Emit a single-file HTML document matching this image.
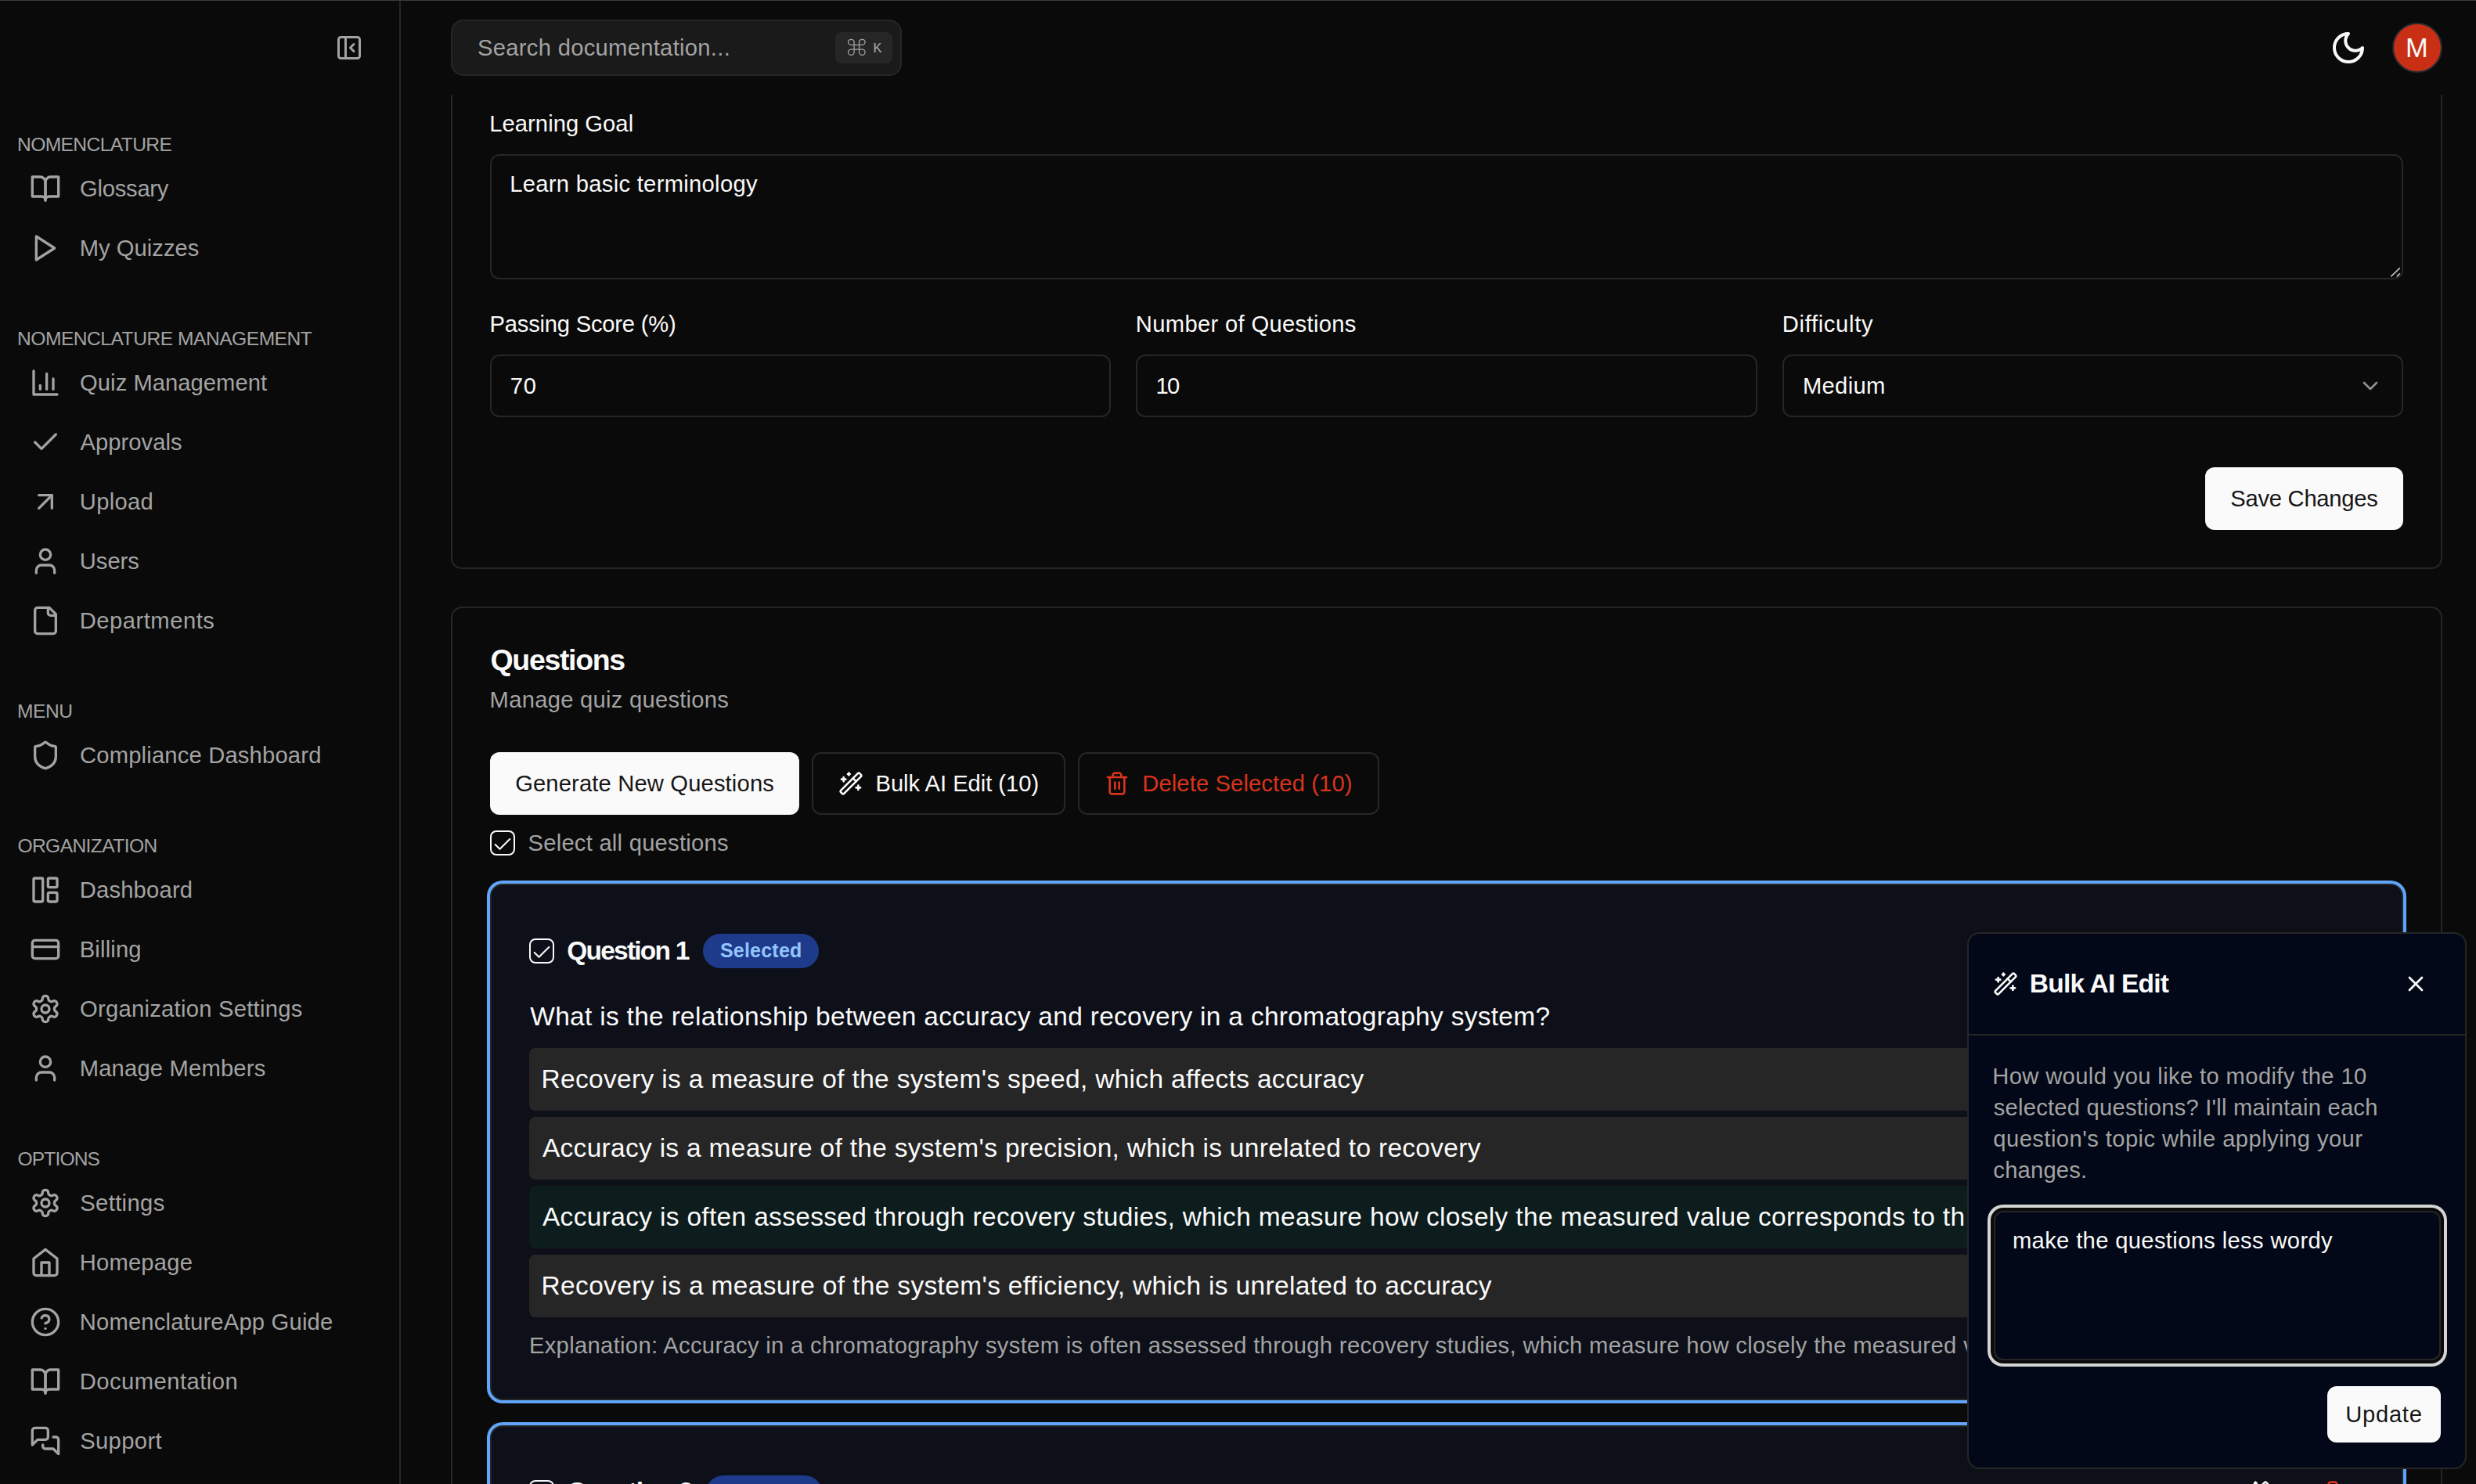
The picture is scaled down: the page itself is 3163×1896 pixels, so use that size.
<!DOCTYPE html>
<html><head><meta charset="utf-8"><title>Quiz</title><style>
html,body{margin:0;padding:0;background:#0a0a0a;}
body{width:3163px;height:1896px;overflow:hidden;position:relative;font-family:"Liberation Sans",sans-serif;}
.t{position:absolute;white-space:nowrap;line-height:1;}
.b{position:absolute;box-sizing:border-box;}
.ic{position:absolute;overflow:visible;}
</style></head><body>
<div class="b" style="left:0px;top:0px;width:3163px;height:1px;background:#3a3c3e"></div>
<div class="b" style="left:510px;top:1px;width:2px;height:1896px;background:#262626"></div>
<svg class="ic" style="left:428px;top:43px;" width="36" height="36" viewBox="0 0 24 24" fill="none" stroke="#a3a3a3" stroke-width="2" stroke-linecap="round" stroke-linejoin="round"><rect width="18" height="18" x="3" y="3" rx="2"/><path d="M9 3v18"/><path d="m16 15-3-3 3-3"/></svg>
<div id="t0" class="t" style="left:21.98px;top:171px;line-height:27px;font-size:24.6px;color:#a3a3a3;letter-spacing:-0.595px;">NOMENCLATURE</div>
<svg class="ic" style="left:38px;top:221px;" width="40" height="40" viewBox="0 0 24 24" fill="none" stroke="#a3a3a3" stroke-width="2" stroke-linecap="round" stroke-linejoin="round"><path d="M2 3h6a4 4 0 0 1 4 4v14a3 3 0 0 0-3-3H2z"/><path d="M22 3h-6a4 4 0 0 0-4 4v14a3 3 0 0 1 3-3h7z"/></svg>
<div id="t1" class="t" style="left:102.03px;top:225px;line-height:32px;font-size:29.2px;color:#a3a3a3;letter-spacing:-0.247px;">Glossary</div>
<svg class="ic" style="left:38px;top:297px;" width="40" height="40" viewBox="0 0 24 24" fill="none" stroke="#a3a3a3" stroke-width="2" stroke-linecap="round" stroke-linejoin="round"><polygon points="5 3 19 12 5 21 5 3"/></svg>
<div id="t2" class="t" style="left:101.70px;top:301px;line-height:32px;font-size:29.2px;color:#a3a3a3;letter-spacing:0.033px;">My Quizzes</div>
<div id="t3" class="t" style="left:21.98px;top:419px;line-height:27px;font-size:24.6px;color:#a3a3a3;letter-spacing:-0.488px;">NOMENCLATURE MANAGEMENT</div>
<svg class="ic" style="left:38px;top:469px;" width="40" height="40" viewBox="0 0 24 24" fill="none" stroke="#a3a3a3" stroke-width="2" stroke-linecap="round" stroke-linejoin="round"><path d="M3 3v18h18"/><path d="M18 17V9"/><path d="M13 17V5"/><path d="M8 17v-3"/></svg>
<div id="t4" class="t" style="left:102.12px;top:473px;line-height:32px;font-size:29.2px;color:#a3a3a3;letter-spacing:0.035px;">Quiz Management</div>
<svg class="ic" style="left:38px;top:545px;" width="40" height="40" viewBox="0 0 24 24" fill="none" stroke="#a3a3a3" stroke-width="2" stroke-linecap="round" stroke-linejoin="round"><path d="M20 6 9 17l-5-5"/></svg>
<div id="t5" class="t" style="left:102.44px;top:549px;line-height:32px;font-size:29.2px;color:#a3a3a3;letter-spacing:0.052px;">Approvals</div>
<svg class="ic" style="left:38px;top:621px;" width="40" height="40" viewBox="0 0 24 24" fill="none" stroke="#a3a3a3" stroke-width="2" stroke-linecap="round" stroke-linejoin="round"><path d="M7 7h10v10"/><path d="M7 17 17 7"/></svg>
<div id="t6" class="t" style="left:101.85px;top:625px;line-height:32px;font-size:29.2px;color:#a3a3a3;letter-spacing:0.267px;">Upload</div>
<svg class="ic" style="left:38px;top:697px;" width="40" height="40" viewBox="0 0 24 24" fill="none" stroke="#a3a3a3" stroke-width="2" stroke-linecap="round" stroke-linejoin="round"><path d="M19 21v-2a4 4 0 0 0-4-4H9a4 4 0 0 0-4 4v2"/><circle cx="12" cy="7" r="4"/></svg>
<div id="t7" class="t" style="left:101.85px;top:701px;line-height:32px;font-size:29.2px;color:#a3a3a3;letter-spacing:-0.053px;">Users</div>
<svg class="ic" style="left:38px;top:773px;" width="40" height="40" viewBox="0 0 24 24" fill="none" stroke="#a3a3a3" stroke-width="2" stroke-linecap="round" stroke-linejoin="round"><path d="M15 2H6a2 2 0 0 0-2 2v16a2 2 0 0 0 2 2h12a2 2 0 0 0 2-2V7Z"/><path d="M14 2v4a2 2 0 0 0 2 2h4"/></svg>
<div id="t8" class="t" style="left:101.70px;top:777px;line-height:32px;font-size:29.2px;color:#a3a3a3;letter-spacing:0.506px;">Departments</div>
<div id="t9" class="t" style="left:21.98px;top:895px;line-height:27px;font-size:24.6px;color:#a3a3a3;letter-spacing:-0.469px;">MENU</div>
<svg class="ic" style="left:38px;top:945px;" width="40" height="40" viewBox="0 0 24 24" fill="none" stroke="#a3a3a3" stroke-width="2" stroke-linecap="round" stroke-linejoin="round"><path d="M20 13c0 5-3.5 7.5-7.66 8.95a1 1 0 0 1-.67-.01C7.5 20.5 4 18 4 13V6a1 1 0 0 1 1-1c2 0 4.5-1.2 6.24-2.72a1.17 1.17 0 0 1 1.52 0C14.51 3.81 17 5 19 5a1 1 0 0 1 1 1z"/></svg>
<div id="t10" class="t" style="left:102.02px;top:949px;line-height:32px;font-size:29.2px;color:#a3a3a3;letter-spacing:0.176px;">Compliance Dashboard</div>
<div id="t11" class="t" style="left:22.43px;top:1067px;line-height:27px;font-size:24.6px;color:#a3a3a3;letter-spacing:-0.600px;">ORGANIZATION</div>
<svg class="ic" style="left:38px;top:1117px;" width="40" height="40" viewBox="0 0 24 24" fill="none" stroke="#a3a3a3" stroke-width="2" stroke-linecap="round" stroke-linejoin="round"><rect width="7" height="18" x="3" y="3" rx="1"/><rect width="7" height="7" x="14" y="3" rx="1"/><rect width="7" height="7" x="14" y="14" rx="1"/></svg>
<div id="t12" class="t" style="left:101.70px;top:1121px;line-height:32px;font-size:29.2px;color:#a3a3a3;letter-spacing:0.198px;">Dashboard</div>
<svg class="ic" style="left:38px;top:1193px;" width="40" height="40" viewBox="0 0 24 24" fill="none" stroke="#a3a3a3" stroke-width="2" stroke-linecap="round" stroke-linejoin="round"><rect width="20" height="14" x="2" y="5" rx="2"/><line x1="2" x2="22" y1="10" y2="10"/></svg>
<div id="t13" class="t" style="left:101.70px;top:1197px;line-height:32px;font-size:29.2px;color:#a3a3a3;letter-spacing:0.167px;">Billing</div>
<svg class="ic" style="left:38px;top:1269px;" width="40" height="40" viewBox="0 0 24 24" fill="none" stroke="#a3a3a3" stroke-width="2" stroke-linecap="round" stroke-linejoin="round"><path d="M12.22 2h-.44a2 2 0 0 0-2 2v.18a2 2 0 0 1-1 1.73l-.43.25a2 2 0 0 1-2 0l-.15-.08a2 2 0 0 0-2.73.73l-.22.38a2 2 0 0 0 .73 2.73l.15.1a2 2 0 0 1 1 1.72v.51a2 2 0 0 1-1 1.74l-.15.09a2 2 0 0 0-.73 2.73l.22.38a2 2 0 0 0 2.73.73l.15-.08a2 2 0 0 1 2 0l.43.25a2 2 0 0 1 1 1.73V20a2 2 0 0 0 2 2h.44a2 2 0 0 0 2-2v-.18a2 2 0 0 1 1-1.73l.43-.25a2 2 0 0 1 2 0l.15.08a2 2 0 0 0 2.73-.73l.22-.39a2 2 0 0 0-.73-2.73l-.15-.08a2 2 0 0 1-1-1.74v-.5a2 2 0 0 1 1-1.74l.15-.09a2 2 0 0 0 .73-2.73l-.22-.38a2 2 0 0 0-2.73-.73l-.15.08a2 2 0 0 1-2 0l-.43-.25a2 2 0 0 1-1-1.73V4a2 2 0 0 0-2-2z"/><circle cx="12" cy="12" r="3"/></svg>
<div id="t14" class="t" style="left:102.12px;top:1273px;line-height:32px;font-size:29.2px;color:#a3a3a3;letter-spacing:0.253px;">Organization Settings</div>
<svg class="ic" style="left:38px;top:1345px;" width="40" height="40" viewBox="0 0 24 24" fill="none" stroke="#a3a3a3" stroke-width="2" stroke-linecap="round" stroke-linejoin="round"><path d="M19 21v-2a4 4 0 0 0-4-4H9a4 4 0 0 0-4 4v2"/><circle cx="12" cy="7" r="4"/></svg>
<div id="t15" class="t" style="left:101.70px;top:1349px;line-height:32px;font-size:29.2px;color:#a3a3a3;letter-spacing:0.178px;">Manage Members</div>
<div id="t16" class="t" style="left:22.43px;top:1467px;line-height:27px;font-size:24.6px;color:#a3a3a3;letter-spacing:-0.849px;">OPTIONS</div>
<svg class="ic" style="left:38px;top:1517px;" width="40" height="40" viewBox="0 0 24 24" fill="none" stroke="#a3a3a3" stroke-width="2" stroke-linecap="round" stroke-linejoin="round"><path d="M12.22 2h-.44a2 2 0 0 0-2 2v.18a2 2 0 0 1-1 1.73l-.43.25a2 2 0 0 1-2 0l-.15-.08a2 2 0 0 0-2.73.73l-.22.38a2 2 0 0 0 .73 2.73l.15.1a2 2 0 0 1 1 1.72v.51a2 2 0 0 1-1 1.74l-.15.09a2 2 0 0 0-.73 2.73l.22.38a2 2 0 0 0 2.73.73l.15-.08a2 2 0 0 1 2 0l.43.25a2 2 0 0 1 1 1.73V20a2 2 0 0 0 2 2h.44a2 2 0 0 0 2-2v-.18a2 2 0 0 1 1-1.73l.43-.25a2 2 0 0 1 2 0l.15.08a2 2 0 0 0 2.73-.73l.22-.39a2 2 0 0 0-.73-2.73l-.15-.08a2 2 0 0 1-1-1.74v-.5a2 2 0 0 1 1-1.74l.15-.09a2 2 0 0 0 .73-2.73l-.22-.38a2 2 0 0 0-2.73-.73l-.15.08a2 2 0 0 1-2 0l-.43-.25a2 2 0 0 1-1-1.73V4a2 2 0 0 0-2-2z"/><circle cx="12" cy="12" r="3"/></svg>
<div id="t17" class="t" style="left:102.17px;top:1521px;line-height:32px;font-size:29.2px;color:#a3a3a3;letter-spacing:0.387px;">Settings</div>
<svg class="ic" style="left:38px;top:1593px;" width="40" height="40" viewBox="0 0 24 24" fill="none" stroke="#a3a3a3" stroke-width="2" stroke-linecap="round" stroke-linejoin="round"><path d="m3 9 9-7 9 7v11a2 2 0 0 1-2 2H5a2 2 0 0 1-2-2z"/><polyline points="9 22 9 12 15 12 15 22"/></svg>
<div id="t18" class="t" style="left:101.70px;top:1597px;line-height:32px;font-size:29.2px;color:#a3a3a3;letter-spacing:0.199px;">Homepage</div>
<svg class="ic" style="left:38px;top:1669px;" width="40" height="40" viewBox="0 0 24 24" fill="none" stroke="#a3a3a3" stroke-width="2" stroke-linecap="round" stroke-linejoin="round"><circle cx="12" cy="12" r="10"/><path d="M9.09 9a3 3 0 0 1 5.83 1c0 2-3 3-3 3"/><path d="M12 17h.01"/></svg>
<div id="t19" class="t" style="left:101.70px;top:1673px;line-height:32px;font-size:29.2px;color:#a3a3a3;letter-spacing:0.198px;">NomenclatureApp Guide</div>
<svg class="ic" style="left:38px;top:1745px;" width="40" height="40" viewBox="0 0 24 24" fill="none" stroke="#a3a3a3" stroke-width="2" stroke-linecap="round" stroke-linejoin="round"><path d="M2 3h6a4 4 0 0 1 4 4v14a3 3 0 0 0-3-3H2z"/><path d="M22 3h-6a4 4 0 0 0-4 4v14a3 3 0 0 1 3-3h7z"/></svg>
<div id="t20" class="t" style="left:101.70px;top:1749px;line-height:32px;font-size:29.2px;color:#a3a3a3;letter-spacing:0.480px;">Documentation</div>
<svg class="ic" style="left:38px;top:1821px;" width="40" height="40" viewBox="0 0 24 24" fill="none" stroke="#a3a3a3" stroke-width="2" stroke-linecap="round" stroke-linejoin="round"><path d="M14 9a2 2 0 0 1-2 2H6l-4 4V4c0-1.1.9-2 2-2h8a2 2 0 0 1 2 2z"/><path d="M18 9h2a2 2 0 0 1 2 2v11l-4-4h-6a2 2 0 0 1-2-2v-1"/></svg>
<div id="t21" class="t" style="left:102.17px;top:1825px;line-height:32px;font-size:29.2px;color:#a3a3a3;letter-spacing:0.368px;">Support</div>
<div class="b" style="left:576px;top:25px;width:576px;height:72px;background:#1a1a1a;border:2px solid #262626;border-radius:16px"></div>
<div id="t22" class="t" style="left:610.07px;top:45px;line-height:32px;font-size:29.2px;color:#a3a3a3;letter-spacing:0.286px;">Search documentation...</div>
<div class="b" style="left:1067px;top:41px;width:73px;height:40px;background:#262626;border-radius:8px"></div>
<svg class="ic" style="left:1080px;top:46px" width="28" height="28" viewBox="0 0 28 28" fill="none" stroke="#a3a3a3" stroke-width="1.3" stroke-linejoin="round"><path d="M11.1 7.85A3.75 3.55 0 1 0 7.35 11.4L21.35 11.4A3.75 3.55 0 1 0 17.6 7.85L17.6 20.75A3.75 3.55 0 1 0 21.35 17.2L7.35 17.2A3.75 3.55 0 1 0 11.1 20.75Z"/></svg>
<div id="t23" class="t" style="left:1115.20px;top:52px;line-height:21px;font-size:18.5px;color:#a3a3a3;letter-spacing:0.000px;font-family:'Liberation Mono',monospace;">K</div>
<svg class="ic" style="left:2976px;top:37px;" width="48" height="48" viewBox="0 0 24 24" fill="none" stroke="#fafafa" stroke-width="2" stroke-linecap="round" stroke-linejoin="round"><path d="M12 3a6 6 0 0 0 9 9 9 9 0 1 1-9-9Z"/></svg>
<div class="b" style="left:3056px;top:29px;width:64px;height:64px;background:#c92f14;border:2px solid #232b33;border-radius:50%"></div>
<div id="t24" class="t" style="left:3073.07px;top:42px;line-height:38px;font-size:34.5px;color:#fafafa;letter-spacing:0.000px;">M</div>
<div class="b" style="left:576px;top:81px;width:2544px;height:646px;border:2px solid #262626;border-radius:14px;clip-path:inset(40px -5px -5px -5px)"></div>
<div id="t25" class="t" style="left:625.30px;top:142px;line-height:32px;font-size:29.2px;color:#fafafa;letter-spacing:0.039px;">Learning Goal</div>
<div class="b" style="left:626px;top:197px;width:2444px;height:160px;border:2px solid #262626;border-radius:12px"></div>
<div id="t26" class="t" style="left:651.20px;top:219px;line-height:32px;font-size:29.2px;color:#fafafa;letter-spacing:0.294px;">Learn basic terminology</div>
<svg class="ic" style="left:3050px;top:338px" width="20" height="20" viewBox="0 0 20 20" stroke="#bdbdbd" stroke-width="1.7" fill="none"><path d="M4.3 15.3 15.8 4.4M11.8 15.4l4-4"/></svg>
<div class="b" style="left:626px;top:453px;width:793.3px;height:80px;border:2px solid #262626;border-radius:12px"></div>
<div class="b" style="left:1451.3px;top:453px;width:793.3px;height:80px;border:2px solid #262626;border-radius:12px"></div>
<div class="b" style="left:2276.7px;top:453px;width:793.3px;height:80px;border:2px solid #262626;border-radius:12px"></div>
<div id="t27" class="t" style="left:625.50px;top:398px;line-height:32px;font-size:29.2px;color:#fafafa;letter-spacing:-0.219px;">Passing Score (%)</div>
<div id="t28" class="t" style="left:1450.80px;top:398px;line-height:32px;font-size:29.2px;color:#fafafa;letter-spacing:0.325px;">Number of Questions</div>
<div id="t29" class="t" style="left:2276.80px;top:398px;line-height:32px;font-size:29.2px;color:#fafafa;letter-spacing:0.665px;">Difficulty</div>
<div id="t30" class="t" style="left:651.80px;top:477px;line-height:32px;font-size:29.2px;color:#fafafa;letter-spacing:0.669px;">70</div>
<div id="t31" class="t" style="left:1476.58px;top:477px;line-height:32px;font-size:29.2px;color:#fafafa;letter-spacing:-1.804px;">10</div>
<div id="t32" class="t" style="left:2302.90px;top:477px;line-height:32px;font-size:29.2px;color:#fafafa;letter-spacing:0.322px;">Medium</div>
<svg class="ic" style="left:3012px;top:477px;" width="32" height="32" viewBox="0 0 24 24" fill="none" stroke="#8f8f8f" stroke-width="2" stroke-linecap="round" stroke-linejoin="round"><path d="m6 9 6 6 6-6"/></svg>
<div class="b" style="left:2817px;top:597px;width:253px;height:80px;background:#fafafa;border-radius:12px"></div>
<div id="t33" class="t" style="left:2849.27px;top:621px;line-height:32px;font-size:29.2px;color:#171717;letter-spacing:-0.264px;">Save Changes</div>
<div class="b" style="left:576px;top:775px;width:2544px;height:1400px;border:2px solid #262626;border-radius:14px"></div>
<div id="t34" class="t" style="left:626.46px;top:822px;line-height:42px;font-size:37.5px;color:#fafafa;letter-spacing:-1.325px;font-weight:700;">Questions</div>
<div id="t35" class="t" style="left:625.60px;top:878px;line-height:32px;font-size:29.2px;color:#a3a3a3;letter-spacing:0.258px;">Manage quiz questions</div>
<div class="b" style="left:626px;top:961px;width:395px;height:80px;background:#fafafa;border-radius:12px"></div>
<div id="t36" class="t" style="left:658.13px;top:985px;line-height:32px;font-size:29.2px;color:#171717;letter-spacing:0.143px;">Generate New Questions</div>
<div class="b" style="left:1037px;top:961px;width:323.5px;height:80px;border:2px solid #262626;border-radius:12px"></div>
<svg class="ic" style="left:1071px;top:985px;" width="32" height="32" viewBox="0 0 24 24" fill="none" stroke="#fafafa" stroke-width="2" stroke-linecap="round" stroke-linejoin="round"><path d="m21.64 3.64-1.28-1.28a1.21 1.21 0 0 0-1.72 0L2.36 18.64a1.21 1.21 0 0 0 0 1.72l1.28 1.28a1.2 1.2 0 0 0 1.72 0L21.64 5.36a1.2 1.2 0 0 0 0-1.72Z"/><path d="m14 7 3 3"/><path d="M5 6v4"/><path d="M19 14v4"/><path d="M10 2v2"/><path d="M7 8H3"/><path d="M21 16h-4"/><path d="M11 3H9"/></svg>
<div id="t37" class="t" style="left:1118.50px;top:985px;line-height:32px;font-size:29.2px;color:#fafafa;letter-spacing:-0.042px;">Bulk AI Edit (10)</div>
<div class="b" style="left:1377px;top:961px;width:385px;height:80px;border:2px solid #262626;border-radius:12px"></div>
<svg class="ic" style="left:1410.5px;top:985px;" width="32" height="32" viewBox="0 0 24 24" fill="none" stroke="#d9331c" stroke-width="2" stroke-linecap="round" stroke-linejoin="round"><path d="M3 6h18"/><path d="M19 6v14c0 1-1 2-2 2H7c-1 0-2-1-2-2V6"/><path d="M8 6V4c0-1 1-2 2-2h4c1 0 2 1 2 2v2"/><line x1="10" x2="10" y1="11" y2="17"/><line x1="14" x2="14" y1="11" y2="17"/></svg>
<div id="t38" class="t" style="left:1459.20px;top:985px;line-height:32px;font-size:29.2px;color:#d9331c;letter-spacing:0.116px;">Delete Selected (10)</div>
<div class="b" style="left:626px;top:1061px;width:32px;height:32px;border:2px solid #fafafa;border-radius:8px"></div>
<svg class="ic" style="left:628.25px;top:1065px" width="28" height="28" viewBox="0 0 24 24" fill="none" stroke="#fafafa" stroke-width="1.75" stroke-linecap="round" stroke-linejoin="round"><path d="M20 6 9 17l-5-5"/></svg>
<div id="t39" class="t" style="left:674.47px;top:1061px;line-height:32px;font-size:29.2px;color:#a3a3a3;letter-spacing:0.241px;">Select all questions</div>
<div class="b" style="left:626px;top:1129px;width:2444px;height:660px;border:2px solid #262626;border-radius:16px;background:#0d0f19;box-shadow:0 0 0 4px #60a5fa"></div>
<div class="b" style="left:676px;top:1199px;width:32px;height:32px;border:2px solid #fafafa;border-radius:8px"></div>
<svg class="ic" style="left:678.25px;top:1203px" width="28" height="28" viewBox="0 0 24 24" fill="none" stroke="#fafafa" stroke-width="1.75" stroke-linecap="round" stroke-linejoin="round"><path d="M20 6 9 17l-5-5"/></svg>
<div id="t40" class="t" style="left:724.23px;top:1196px;line-height:37px;font-size:33.5px;color:#fafafa;letter-spacing:-1.769px;font-weight:700;">Question 1</div>
<div class="b" style="left:898px;top:1193px;width:148px;height:44px;background:#1e3a8a;border-radius:22px"></div>
<div id="t41" class="t" style="left:919.88px;top:1200px;line-height:28px;font-size:25px;color:#93c5fd;letter-spacing:0.232px;font-weight:700;">Selected</div>
<svg class="ic" style="left:2868px;top:1199px;" width="32" height="32" viewBox="0 0 24 24" fill="none" stroke="#fafafa" stroke-width="2" stroke-linecap="round" stroke-linejoin="round"><path d="m21.64 3.64-1.28-1.28a1.21 1.21 0 0 0-1.72 0L2.36 18.64a1.21 1.21 0 0 0 0 1.72l1.28 1.28a1.2 1.2 0 0 0 1.72 0L21.64 5.36a1.2 1.2 0 0 0 0-1.72Z"/><path d="m14 7 3 3"/><path d="M5 6v4"/><path d="M19 14v4"/><path d="M10 2v2"/><path d="M7 8H3"/><path d="M21 16h-4"/><path d="M11 3H9"/></svg>
<svg class="ic" style="left:2964px;top:1199px;" width="32" height="32" viewBox="0 0 24 24" fill="none" stroke="#d9331c" stroke-width="2" stroke-linecap="round" stroke-linejoin="round"><path d="M3 6h18"/><path d="M19 6v14c0 1-1 2-2 2H7c-1 0-2-1-2-2V6"/><path d="M8 6V4c0-1 1-2 2-2h4c1 0 2 1 2 2v2"/><line x1="10" x2="10" y1="11" y2="17"/><line x1="14" x2="14" y1="11" y2="17"/></svg>
<div id="t42" class="t" style="left:677.25px;top:1280px;line-height:37px;font-size:33.5px;color:#fafafa;letter-spacing:0.292px;">What is the relationship between accuracy and recovery in a chromatography system?</div>
<div class="b" style="left:676px;top:1339px;width:2344px;height:80px;background:#262626;border-radius:8px"></div>
<div id="t43" class="t" style="left:691.55px;top:1360px;line-height:37px;font-size:33.5px;color:#fafafa;letter-spacing:0.315px;">Recovery is a measure of the system&#x27;s speed, which affects accuracy</div>
<div class="b" style="left:676px;top:1427px;width:2344px;height:80px;background:#262626;border-radius:8px"></div>
<div id="t44" class="t" style="left:692.93px;top:1448px;line-height:37px;font-size:33.5px;color:#fafafa;letter-spacing:0.293px;">Accuracy is a measure of the system&#x27;s precision, which is unrelated to recovery</div>
<div class="b" style="left:676px;top:1515px;width:2344px;height:80px;background:#0d1c1c;border-radius:8px"></div>
<div id="t45" class="t" style="left:692.93px;top:1536px;line-height:37px;font-size:33.5px;color:#fafafa;letter-spacing:0.325px;">Accuracy is often assessed through recovery studies, which measure how closely the measured value corresponds to th</div>
<div class="b" style="left:676px;top:1603px;width:2344px;height:80px;background:#262626;border-radius:8px"></div>
<div id="t46" class="t" style="left:691.55px;top:1624px;line-height:37px;font-size:33.5px;color:#fafafa;letter-spacing:0.336px;">Recovery is a measure of the system&#x27;s efficiency, which is unrelated to accuracy</div>
<div id="t47" class="t" style="left:675.90px;top:1703px;line-height:32px;font-size:29.2px;color:#a3a3a3;letter-spacing:0.323px;">Explanation: Accuracy in a chromatography system is often assessed through recovery studies, which measure how closely the measured value corresponds to the true value</div>
<div class="b" style="left:626px;top:1821px;width:2444px;height:660px;border:2px solid #262626;border-radius:16px;background:#0d0f19;box-shadow:0 0 0 4px #60a5fa"></div>
<div class="b" style="left:676px;top:1891px;width:32px;height:32px;border:2px solid #fafafa;border-radius:8px"></div>
<svg class="ic" style="left:678.25px;top:1895px" width="28" height="28" viewBox="0 0 24 24" fill="none" stroke="#fafafa" stroke-width="1.75" stroke-linecap="round" stroke-linejoin="round"><path d="M20 6 9 17l-5-5"/></svg>
<div id="t48" class="t" style="left:724.23px;top:1887px;line-height:37px;font-size:33.5px;color:#fafafa;letter-spacing:-1.301px;font-weight:700;">Question 2</div>
<div class="b" style="left:901.8px;top:1885px;width:148px;height:44px;background:#1e3a8a;border-radius:22px"></div>
<div id="t49" class="t" style="left:923.68px;top:1892px;line-height:28px;font-size:25px;color:#93c5fd;letter-spacing:0.232px;font-weight:700;">Selected</div>
<svg class="ic" style="left:2868px;top:1891px;" width="32" height="32" viewBox="0 0 24 24" fill="none" stroke="#fafafa" stroke-width="2" stroke-linecap="round" stroke-linejoin="round"><path d="m21.64 3.64-1.28-1.28a1.21 1.21 0 0 0-1.72 0L2.36 18.64a1.21 1.21 0 0 0 0 1.72l1.28 1.28a1.2 1.2 0 0 0 1.72 0L21.64 5.36a1.2 1.2 0 0 0 0-1.72Z"/><path d="m14 7 3 3"/><path d="M5 6v4"/><path d="M19 14v4"/><path d="M10 2v2"/><path d="M7 8H3"/><path d="M21 16h-4"/><path d="M11 3H9"/></svg>
<svg class="ic" style="left:2964px;top:1891px;" width="32" height="32" viewBox="0 0 24 24" fill="none" stroke="#d9331c" stroke-width="2" stroke-linecap="round" stroke-linejoin="round"><path d="M3 6h18"/><path d="M19 6v14c0 1-1 2-2 2H7c-1 0-2-1-2-2V6"/><path d="M8 6V4c0-1 1-2 2-2h4c1 0 2 1 2 2v2"/><line x1="10" x2="10" y1="11" y2="17"/><line x1="14" x2="14" y1="11" y2="17"/></svg>
<div class="b" style="left:2512.5px;top:1191px;width:638.5px;height:686px;background:#020817;border:2px solid #262626;border-radius:16px"></div>
<svg class="ic" style="left:2546px;top:1241px;" width="32" height="32" viewBox="0 0 24 24" fill="none" stroke="#fafafa" stroke-width="2" stroke-linecap="round" stroke-linejoin="round"><path d="m21.64 3.64-1.28-1.28a1.21 1.21 0 0 0-1.72 0L2.36 18.64a1.21 1.21 0 0 0 0 1.72l1.28 1.28a1.2 1.2 0 0 0 1.72 0L21.64 5.36a1.2 1.2 0 0 0 0-1.72Z"/><path d="m14 7 3 3"/><path d="M5 6v4"/><path d="M19 14v4"/><path d="M10 2v2"/><path d="M7 8H3"/><path d="M21 16h-4"/><path d="M11 3H9"/></svg>
<div id="t50" class="t" style="left:2592.86px;top:1238px;line-height:37px;font-size:33.5px;color:#fafafa;letter-spacing:-0.791px;font-weight:700;">Bulk AI Edit</div>
<svg class="ic" style="left:3070px;top:1241px;" width="32" height="32" viewBox="0 0 24 24" fill="none" stroke="#fafafa" stroke-width="2" stroke-linecap="round" stroke-linejoin="round"><path d="M18 6 6 18"/><path d="m6 6 12 12"/></svg>
<div class="b" style="left:2515px;top:1321px;width:634px;height:2px;background:#262626"></div>
<div id="t51" class="t" style="left:2545.20px;top:1359px;line-height:32px;font-size:29.2px;color:#a3a3a3;letter-spacing:0.365px;">How would you like to modify the 10</div>
<div id="t52" class="t" style="left:2546.79px;top:1399px;line-height:32px;font-size:29.2px;color:#a3a3a3;letter-spacing:0.217px;">selected questions? I&#x27;ll maintain each</div>
<div id="t53" class="t" style="left:2546.37px;top:1439px;line-height:32px;font-size:29.2px;color:#a3a3a3;letter-spacing:0.428px;">question&#x27;s topic while applying your</div>
<div id="t54" class="t" style="left:2546.36px;top:1479px;line-height:32px;font-size:29.2px;color:#a3a3a3;letter-spacing:0.191px;">changes.</div>
<div class="b" style="left:2546.5px;top:1547px;width:571.5px;height:191px;background:#020817;border:2px solid #262626;border-radius:12px;box-shadow:0 0 0 4px #0a0a0a,0 0 0 8px #d4d4d4"></div>
<div id="t55" class="t" style="left:2570.96px;top:1569px;line-height:32px;font-size:29.2px;color:#fafafa;letter-spacing:0.343px;">make the questions less wordy</div>
<div class="b" style="left:2973px;top:1771px;width:145px;height:72px;background:#fafafa;border-radius:12px"></div>
<div id="t56" class="t" style="left:2996.35px;top:1791px;line-height:32px;font-size:29.2px;color:#171717;letter-spacing:0.685px;">Update</div>
</body></html>
